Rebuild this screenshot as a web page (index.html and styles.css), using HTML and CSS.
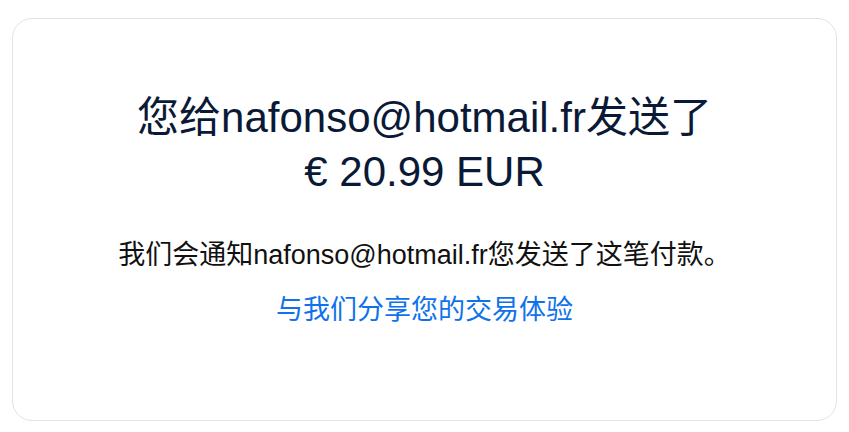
FILE: index.html
```html
<!DOCTYPE html>
<html lang="zh-CN">
<head>
  <meta charset="UTF-8" />
  <meta name="viewport" content="width=device-width, initial-scale=1.0" />
  <title>付款已发送</title>
  <link rel="stylesheet" href="styles.css">
</head>
<body>

  <div class="card">
    <h1 class="sent-title">
      您给nafonso@hotmail.fr发送了<br>
      € 20.99 EUR
    </h1>

    <p class="sent-note">我们会通知nafonso@hotmail.fr您发送了这笔付款。</p>

    <a class="share-link" href="#">与我们分享您的交易体验</a>
  </div>

</body>
</html>
```

FILE: styles.css
```css
body {
  margin: 0;
  padding: 18px 12px 10px;
  font-family: "Liberation Sans", Arial, "Noto Sans CJK SC", sans-serif;
  background: #ffffff;
}

.card {
  height: 403px;
  box-sizing: border-box;
  border: 1px solid #e3e3e3;
  border-radius: 20px;
  padding-top: 72px;
  text-align: center;
}

.sent-title {
  margin: 0;
  font-size: 42px;
  font-weight: normal;
  line-height: 54px;
  color: #0a1a36;
}

.sent-note {
  margin: 39px 0 0;
  font-size: 27px;
  line-height: 34px;
  color: #111111;
}

.share-link {
  display: inline-block;
  margin-top: 21px;
  font-size: 27px;
  line-height: 34px;
  color: #1072eb;
  text-decoration: none;
}
```
